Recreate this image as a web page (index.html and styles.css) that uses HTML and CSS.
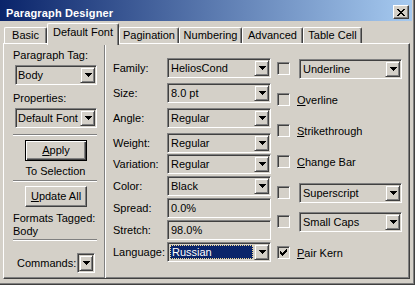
FILE: index.html
```html
<!DOCTYPE html>
<html>
<head>
<meta charset="utf-8">
<link rel="stylesheet" href="styles.css">
</head>
<body>
<div class="window">
  <div class="titlebar">
    <span class="title">Paragraph Designer</span>
    <span class="close"><svg width="8" height="7" viewBox="0 0 8 7"><path d="M0 0h2v1H0zM6 0h2v1H6zM1 1h2v1H1zM5 1h2v1H5zM2 2h4v1H2zM3 3h2v1H3zM2 4h4v1H2zM1 5h2v1H1zM5 5h2v1H5zM0 6h2v1H0zM6 6h2v1H6z" fill="#000"/></svg></span>
  </div>
  <div class="tabs">
    <div class="tab tab-basic">Basic</div>
    <div class="tab tab-default active">Default Font</div>
    <div class="tab tab-pagination">Pagination</div>
    <div class="tab tab-numbering">Numbering</div>
    <div class="tab tab-advanced">Advanced</div>
    <div class="tab tab-tablecell">Table Cell</div>
  </div>
  <div class="panel">
    <div class="lcol">
      <div class="lbl mt5">Paragraph Tag:</div>
      <div class="combo lcombo mt3"><span class="combo-text">Body</span><span class="arrow"><svg width="7" height="4" viewBox="0 0 7 4"><path d="M0 0h7v1H0zM1 1h5v1H1zM2 2h3v1H2zM3 3h1v1H3z" fill="#000"/></svg></span></div>
      <div class="lbl mt7">Properties:</div>
      <div class="combo lcombo mt3"><span class="combo-text">Default Font</span><span class="arrow"><svg width="7" height="4" viewBox="0 0 7 4"><path d="M0 0h7v1H0zM1 1h5v1H1zM2 2h3v1H2zM3 3h1v1H3z" fill="#000"/></svg></span></div>
      <div class="sep mt6"></div>
      <div class="btn btn-default mt4"><u>A</u>pply</div>
      <div class="lbl center mt4">To Selection</div>
      <div class="sep mt2"></div>
      <div class="btn mt4"><u>U</u>pdate All</div>
      <div class="lbl mt5">Formats Tagged:</div>
      <div class="lbl">Body</div>
      <div class="sep mt1"></div>
      <div class="cmdrow">
        <span class="cmdlabel">Commands:</span>
        <div class="combo cmdcombo"><span class="arrow"><svg width="7" height="4" viewBox="0 0 7 4"><path d="M0 0h7v1H0zM1 1h5v1H1zM2 2h3v1H2zM3 3h1v1H3z" fill="#000"/></svg></span></div>
      </div>
    </div>
    <div class="mcol">
      <div class="group">
        <div class="frow"><span class="flabel">Family:</span><div class="combo mcombo"><span class="combo-text">HeliosCond</span><span class="arrow"><svg width="7" height="4" viewBox="0 0 7 4"><path d="M0 0h7v1H0zM1 1h5v1H1zM2 2h3v1H2zM3 3h1v1H3z" fill="#000"/></svg></span></div></div>
        <div class="frow"><span class="flabel">Size:</span><div class="combo mcombo"><span class="combo-text">8.0 pt</span><span class="arrow"><svg width="7" height="4" viewBox="0 0 7 4"><path d="M0 0h7v1H0zM1 1h5v1H1zM2 2h3v1H2zM3 3h1v1H3z" fill="#000"/></svg></span></div></div>
        <div class="frow"><span class="flabel">Angle:</span><div class="combo mcombo"><span class="combo-text">Regular</span><span class="arrow"><svg width="7" height="4" viewBox="0 0 7 4"><path d="M0 0h7v1H0zM1 1h5v1H1zM2 2h3v1H2zM3 3h1v1H3z" fill="#000"/></svg></span></div></div>
        <div class="frow"><span class="flabel">Weight:</span><div class="combo mcombo"><span class="combo-text">Regular</span><span class="arrow"><svg width="7" height="4" viewBox="0 0 7 4"><path d="M0 0h7v1H0zM1 1h5v1H1zM2 2h3v1H2zM3 3h1v1H3z" fill="#000"/></svg></span></div></div>
      </div>
      <div class="group tight">
        <div class="frow"><span class="flabel">Variation:</span><div class="combo mcombo"><span class="combo-text">Regular</span><span class="arrow"><svg width="7" height="4" viewBox="0 0 7 4"><path d="M0 0h7v1H0zM1 1h5v1H1zM2 2h3v1H2zM3 3h1v1H3z" fill="#000"/></svg></span></div></div>
        <div class="frow"><span class="flabel">Color:</span><div class="combo mcombo"><span class="combo-text">Black</span><span class="arrow"><svg width="7" height="4" viewBox="0 0 7 4"><path d="M0 0h7v1H0zM1 1h5v1H1zM2 2h3v1H2zM3 3h1v1H3z" fill="#000"/></svg></span></div></div>
        <div class="frow"><span class="flabel">Spread:</span><div class="combo mcombo"><span class="combo-text">0.0%</span></div></div>
        <div class="frow"><span class="flabel">Stretch:</span><div class="combo mcombo"><span class="combo-text">98.0%</span></div></div>
        <div class="frow"><span class="flabel">Language:</span><div class="combo mcombo"><span class="combo-text selected">Russian</span><span class="arrow"><svg width="7" height="4" viewBox="0 0 7 4"><path d="M0 0h7v1H0zM1 1h5v1H1zM2 2h3v1H2zM3 3h1v1H3z" fill="#000"/></svg></span></div></div>
      </div>
    </div>
    <div class="rcol">
      <div class="crow"><span class="check"></span><div class="combo rcombo"><span class="combo-text">Underline</span><span class="arrow"><svg width="7" height="4" viewBox="0 0 7 4"><path d="M0 0h7v1H0zM1 1h5v1H1zM2 2h3v1H2zM3 3h1v1H3z" fill="#000"/></svg></span></div></div>
      <div class="crow"><span class="check"></span><span class="clabel"><u>O</u>verline</span></div>
      <div class="crow"><span class="check"></span><span class="clabel"><u>S</u>trikethrough</span></div>
      <div class="crow"><span class="check"></span><span class="clabel"><u>C</u>hange Bar</span></div>
      <div class="crow"><span class="check"></span><div class="combo rcombo"><span class="combo-text">Superscript</span><span class="arrow"><svg width="7" height="4" viewBox="0 0 7 4"><path d="M0 0h7v1H0zM1 1h5v1H1zM2 2h3v1H2zM3 3h1v1H3z" fill="#000"/></svg></span></div></div>
      <div class="crow crow-up"><span class="check"></span><div class="combo rcombo"><span class="combo-text">Small Caps</span><span class="arrow"><svg width="7" height="4" viewBox="0 0 7 4"><path d="M0 0h7v1H0zM1 1h5v1H1zM2 2h3v1H2zM3 3h1v1H3z" fill="#000"/></svg></span></div></div>
      <div class="crow"><span class="check"><svg width="7" height="7" viewBox="0 0 7 7"><path d="M6 0h1v3h-1zM5 1h1v3h-1zM4 2h1v3h-1zM3 3h1v3h-1zM2 4h1v3h-1zM1 3h1v3h-1zM0 2h1v3H0z" fill="#000"/></svg></span><span class="clabel"><u>P</u>air Kern</span></div>
    </div>
  </div>
</div>
</body>
</html>
```
FILE: styles.css
```css
* { box-sizing: border-box; margin: 0; padding: 0; }
html, body { width: 415px; height: 285px; overflow: hidden; }
body {
  background: #d4d0c8;
  font-family: "Liberation Sans", Arial, sans-serif;
  font-size: 11px;
  color: #000;
}
.window {
  width: 415px;
  height: 285px;
  padding: 0 3px 3px 0;
  display: flex;
  flex-direction: column;
  box-shadow: inset -1px -1px 0 #404040, inset -2px -2px 0 #808080;
}
.titlebar {
  height: 21px;
  display: flex;
  background: linear-gradient(to right, #0a246a, #a6caf0);
}
.title {
  color: #fff;
  font-weight: bold;
  font-size: 11px;
  letter-spacing: 0.15px;
  line-height: 13px;
  padding: 7px 0 0 6px;
}
.close {
  margin: 5px 3px 0 auto;
  width: 16px;
  height: 14px;
  background: #d4d0c8;
  border: 1px solid;
  border-color: #fff #404040 #404040 #fff;
  box-shadow: inset -1px -1px 0 #808080;
  display: flex;
  align-items: center;
  justify-content: center;
}
.tabs {
  height: 22px;
  display: flex;
  align-items: flex-end;
  padding-left: 4px;
  position: relative;
  z-index: 1;
}
.tab {
  height: 16px;
  border-top: 1px solid #fff;
  border-left: 1px solid #fff;
  border-right: 1px solid #404040;
  box-shadow: inset -1px 0 0 #808080;
  border-radius: 2px 2px 0 0;
  text-align: center;
  line-height: 14px;
  white-space: nowrap;
  background: #d4d0c8;
}
.tab.active {
  height: 22px;
  margin-bottom: -2px;
  line-height: 17px;
}
.tab-basic { width: 43px; }
.tab-default { width: 72px; }
.tab-pagination { width: 60px; }
.tab-numbering { width: 63px; }
.tab-advanced { width: 61px; }
.tab-tablecell { width: 59px; }

.panel {
  margin-left: 3px;
  width: 407px;
  height: 236px;
  display: flex;
  border: 1px solid;
  border-color: #fff #404040 #404040 #fff;
  box-shadow: inset -1px -1px 0 #808080;
}
.lcol {
  width: 101px;
  border-right: 1px solid #808080;
  box-shadow: 1px 0 0 #fff;
  padding: 0 6px 0 9px;
  display: flex;
  flex-direction: column;
}
.lbl { line-height: 13px; white-space: nowrap; }
.center { text-align: center; }
.mt1 { margin-top: 1px; }
.mt2 { margin-top: 2px; }
.mt3 { margin-top: 3px; }
.mt4 { margin-top: 4px; }
.mt5 { margin-top: 5px; }
.mt6 { margin-top: 6px; }
.mt7 { margin-top: 7px; }
.sep {
  width: 84px;
  height: 2px;
  border-top: 1px solid #808080;
  border-bottom: 1px solid #fff;
}
.combo {
  display: flex;
  height: 20px;
  padding: 1px;
  border: 1px solid;
  border-color: #808080 #fff #fff #808080;
  box-shadow: inset 1px 1px 0 #404040, inset -1px -1px 0 #d4d0c8;
  background: #d4d0c8;
}
.combo-text {
  flex: 1;
  line-height: 16px;
  padding-left: 2px;
  white-space: nowrap;
  overflow: hidden;
}
.combo-text.selected {
  background: #0a246a;
  color: #fff;
  margin: 1px 1px 1px 1px;
  border: 1px dotted #f5db95;
  line-height: 12px;
  padding-left: 1px;
}
.arrow {
  width: 15px;
  height: 16px;
  border: 1px solid;
  border-color: #d4d0c8 #404040 #404040 #d4d0c8;
  box-shadow: inset 1px 1px 0 #fff, inset -1px -1px 0 #808080;
  display: flex;
  align-items: center;
  justify-content: center;
  background: #d4d0c8;
  flex: none;
}
.arrow svg { margin-left: 1px; }
.lcombo { width: 82px; margin-left: 2px; }
.lcombo .combo-text { padding-left: 1px; }
.mcombo { width: 104px; }
.rcombo { width: 103px; margin-left: 9px; }
.btn {
  width: 62px;
  height: 21px;
  margin-left: 12px;
  border: 1px solid;
  border-color: #fff #404040 #404040 #fff;
  box-shadow: inset -1px -1px 0 #808080;
  text-align: center;
  line-height: 19px;
}
.btn-default {
  border-color: #000;
  box-shadow: inset 1px 1px 0 #fff, inset -1px -1px 0 #404040, inset -2px -2px 0 #808080;
}
.cmdrow {
  margin-top: 12px;
  display: flex;
  align-items: center;
  padding-left: 4px;
  gap: 1px;
}
.cmdlabel { line-height: 13px; }
.cmdcombo { width: 18px; }
.cmdcombo .arrow { width: 14px; }

.mcol {
  width: 168px;
  padding: 14px 0 0 8px;
}
.group {
  display: flex;
  flex-direction: column;
  gap: 5px;
}
.group.tight {
  gap: 2px;
  margin-top: 1px;
}
.frow {
  display: flex;
  align-items: center;
  height: 20px;
}
.flabel { width: 54px; white-space: nowrap; }

.rcol {
  flex: 1;
  padding: 14px 0 0 4px;
  display: flex;
  flex-direction: column;
  gap: 10px;
}
.crow {
  display: flex;
  align-items: center;
  height: 21px;
}
.crow-up { margin-top: -2px; }
.check {
  width: 13px;
  height: 13px;
  border: 1px solid;
  border-color: #808080 #fff #fff #808080;
  box-shadow: inset 1px 1px 0 #404040, inset -1px -1px 0 #d4d0c8;
  background: #d4d0c8;
  display: flex;
  align-items: center;
  justify-content: center;
  flex: none;
}
.clabel { margin-left: 7px; white-space: nowrap; }
```
